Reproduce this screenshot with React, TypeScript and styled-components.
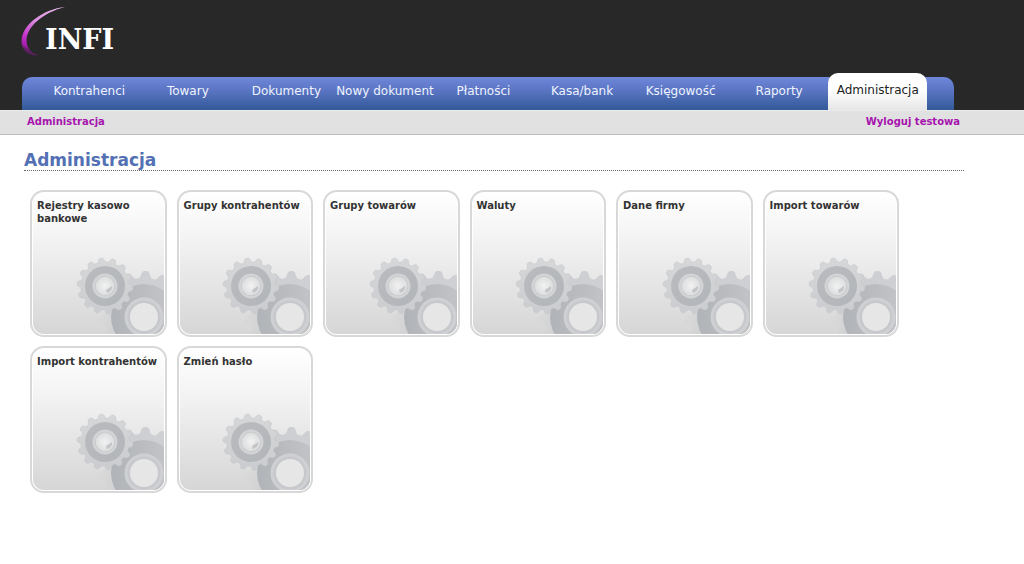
import React from "react";
import styled, { createGlobalStyle, css } from "styled-components";

const GlobalStyle = createGlobalStyle`
  * { box-sizing: border-box; }
  body {
    margin: 0;
    background: #fff;
    font-family: "DejaVu Sans", Verdana, sans-serif;
    font-size: 12px;
    color: #333;
  }
`;

const Container = styled.div`
  max-width: 964px;
`;

const Header = styled.header`
  background: #282828;
`;

const LogoLink = styled.a`
  display: flex;
  height: 77px;
  padding: 4px 0 0 20px;
`;

const LogoText = styled.text`
  font: bold 27px "DejaVu Serif", serif;
  fill: #fff;
`;

const Nav = styled.nav`
  display: grid;
  grid-template-columns: repeat(9, 1fr);
  grid-template-rows: 33px;
  align-items: end;
  margin: 0 10px 0 22px;
  padding: 0 27px 0 18px;
  background: linear-gradient(#6f87da, #5873c0 45%, #315a98);
  border-radius: 10px 10px 0 0;
`;

const Tab = styled.a<{ $active?: boolean }>`
  display: flex;
  justify-content: center;
  height: 33px;
  padding-top: 6px;
  line-height: 16px;
  white-space: nowrap;
  text-decoration: none;
  color: #eef3ff;
  ${(p) =>
    p.$active &&
    css`
      height: 37px;
      padding-top: 9px;
      color: #222;
      background: linear-gradient(#fff 45%, #e6e6e6);
      border-radius: 10px 10px 0 0;
    `}
`;

const SubBar = styled.div`
  background: #e1e1e1;
  border-top: 1px solid #ececec;
  border-bottom: 1px solid #bdbdbd;
`;

const SubRow = styled(Container)`
  display: flex;
  justify-content: space-between;
  padding: 3px 4px 4px 27px;
`;

const SubLink = styled.a`
  font-size: 10px;
  font-weight: bold;
  line-height: 16px;
  color: #a615ae;
  text-decoration: none;
`;

const Main = styled(Container).attrs({ as: "main" })`
  padding: 15px 0 24px 24px;
`;

const Title = styled.h1`
  margin: 0;
  font-size: 17px;
  line-height: 20px;
  color: #5270b3;
  border-bottom: 1px dotted #666;
`;

const Tiles = styled.div`
  display: grid;
  grid-template-columns: repeat(6, 1fr);
  gap: 9px 10px;
  padding: 19px 65px 0 6px;
`;

const Tile = styled.a`
  display: flex;
  height: 147px;
  padding: 1px;
  background: #fff;
  border: 2px solid #d8d8d8;
  border-radius: 14px;
  color: #333;
  text-decoration: none;
`;

const TileFace = styled.span`
  flex: 1;
  display: flex;
  flex-direction: column;
  justify-content: space-between;
  overflow: hidden;
  border-radius: 11px;
  background: linear-gradient(#fff, #f4f4f4 30%, #d6d6d6);
`;

const TileLabel = styled.span`
  padding: 6px 0 0 4px;
  font-size: 10px;
  font-weight: bold;
  line-height: 13px;
`;

const GearArt = styled.svg`
  display: block;
  flex: none;
  align-self: flex-end;
`;

const gearPath = (cx: number, cy: number, root: number, height: number, teeth: number, phase: number) => {
  const points: string[] = [];
  for (let deg = 0; deg < 360; deg += 1) {
    const wave = Math.cos((teeth * (deg - phase) * Math.PI) / 180);
    const radius = root + (height * (1 + Math.tanh(wave * 1.8) / Math.tanh(1.8))) / 2;
    const a = (deg * Math.PI) / 180;
    points.push(`${(cx + radius * Math.cos(a)).toFixed(2)} ${(cy + radius * Math.sin(a)).toFixed(2)}`);
  }
  return `M${points.join("L")}Z`;
};

const SMALL_GEAR = gearPath(29, 33, 24, 4, 14, -98);
const LARGE_GEAR = gearPath(68, 64, 39, 7, 15, -88);

const Gears = () => (
  <GearArt width="88" height="81" viewBox="0 0 88 81" aria-hidden="true">
    <defs>
      <linearGradient id="rim" x1="0" y1="0" x2="0" y2="1">
        <stop offset="0" stopColor="#d6d7d8" />
        <stop offset="1" stopColor="#cbcccf" />
      </linearGradient>
      <linearGradient id="ring" x1="0" y1="0" x2="1" y2="1">
        <stop offset="0" stopColor="#b9bbbf" />
        <stop offset="1" stopColor="#b2b5b9" />
      </linearGradient>
      <linearGradient id="largeRing" x1="0" y1="0" x2="1" y2="0">
        <stop offset="0" stopColor="#b0b3b7" />
        <stop offset="0.75" stopColor="#c0c2c5" />
      </linearGradient>
      <linearGradient id="largeRim" x1="0" y1="0" x2="1" y2="0">
        <stop offset="0.04" stopColor="#cfd0d2" stopOpacity="0.2" />
        <stop offset="0.3" stopColor="#cdced1" />
        <stop offset="1" stopColor="#d0d1d4" />
      </linearGradient>
      <radialGradient id="hub">
        <stop offset="0" stopColor="#f2f2f2" />
        <stop offset="1" stopColor="#dcddde" />
      </radialGradient>
    </defs>
    <path d={LARGE_GEAR} fill="url(#largeRim)" />
    <circle cx="68" cy="64" r="33" fill="url(#largeRing)" />
    <circle cx="68" cy="64" r="19.5" fill="#cfd0d3" />
    <circle cx="68" cy="64" r="16.5" fill="#c6c8cb" />
    <circle cx="68" cy="64" r="14" fill="#e6e6e6" />
    <path d={SMALL_GEAR} fill="url(#rim)" stroke="#c6c8cb" strokeWidth="0.6" />
    <circle cx="29" cy="33" r="20" fill="url(#ring)" />
    <circle cx="29" cy="33" r="12.5" fill="#d3d4d6" />
    <circle cx="29" cy="33" r="10.2" fill="#c8cacc" />
    <circle cx="29" cy="33" r="9.3" fill="url(#hub)" />
    <path d="M30 37 L36 33 Q37 38 31 40 Z" fill="#c3c5c8" />
  </GearArt>
);

const Logo = () => (
  <svg width="110" height="56" viewBox="0 0 110 56" role="img" aria-label="INFI">
    <defs>
      <linearGradient id="swoosh" x1="0.8" y1="0" x2="0.4" y2="1">
        <stop offset="0" stopColor="#e9b4ec" />
        <stop offset="0.4" stopColor="#dc8fe0" />
        <stop offset="0.75" stopColor="#c535cc" />
        <stop offset="0.93" stopColor="#a51fac" />
        <stop offset="1" stopColor="#5c2060" />
      </linearGradient>
    </defs>
    <path d="M45 3 C24 5 2 20 1.5 37 C1.5 47 9 52.5 19 51 C11 49.500 6.500 44 6.500 36 C7 23 22 9 45 3 Z" fill="url(#swoosh)" />
    <LogoText x="25" y="45">INFI</LogoText>
  </svg>
);

const TABS = [
  "Kontrahenci",
  "Towary",
  "Dokumenty",
  "Nowy dokument",
  "Płatności",
  "Kasa/bank",
  "Księgowość",
  "Raporty",
  "Administracja",
];

const TILES = [
  "Rejestry kasowo bankowe",
  "Grupy kontrahentów",
  "Grupy towarów",
  "Waluty",
  "Dane firmy",
  "Import towarów",
  "Import kontrahentów",
  "Zmień hasło",
];

export default function App() {
  return (
    <>
      <GlobalStyle />
      <Header>
        <Container>
          <LogoLink href="#">
            <Logo />
          </LogoLink>
          <Nav>
            {TABS.map((tab) => (
              <Tab key={tab} href="#" $active={tab === "Administracja"}>
                {tab}
              </Tab>
            ))}
          </Nav>
        </Container>
      </Header>
      <SubBar>
        <SubRow>
          <SubLink href="#">Administracja</SubLink>
          <SubLink href="#">Wyloguj testowa</SubLink>
        </SubRow>
      </SubBar>
      <Main>
        <Title>Administracja</Title>
        <Tiles>
          {TILES.map((label) => (
            <Tile key={label} href="#">
              <TileFace>
                <TileLabel>{label}</TileLabel>
                <Gears />
              </TileFace>
            </Tile>
          ))}
        </Tiles>
      </Main>
    </>
  );
}
